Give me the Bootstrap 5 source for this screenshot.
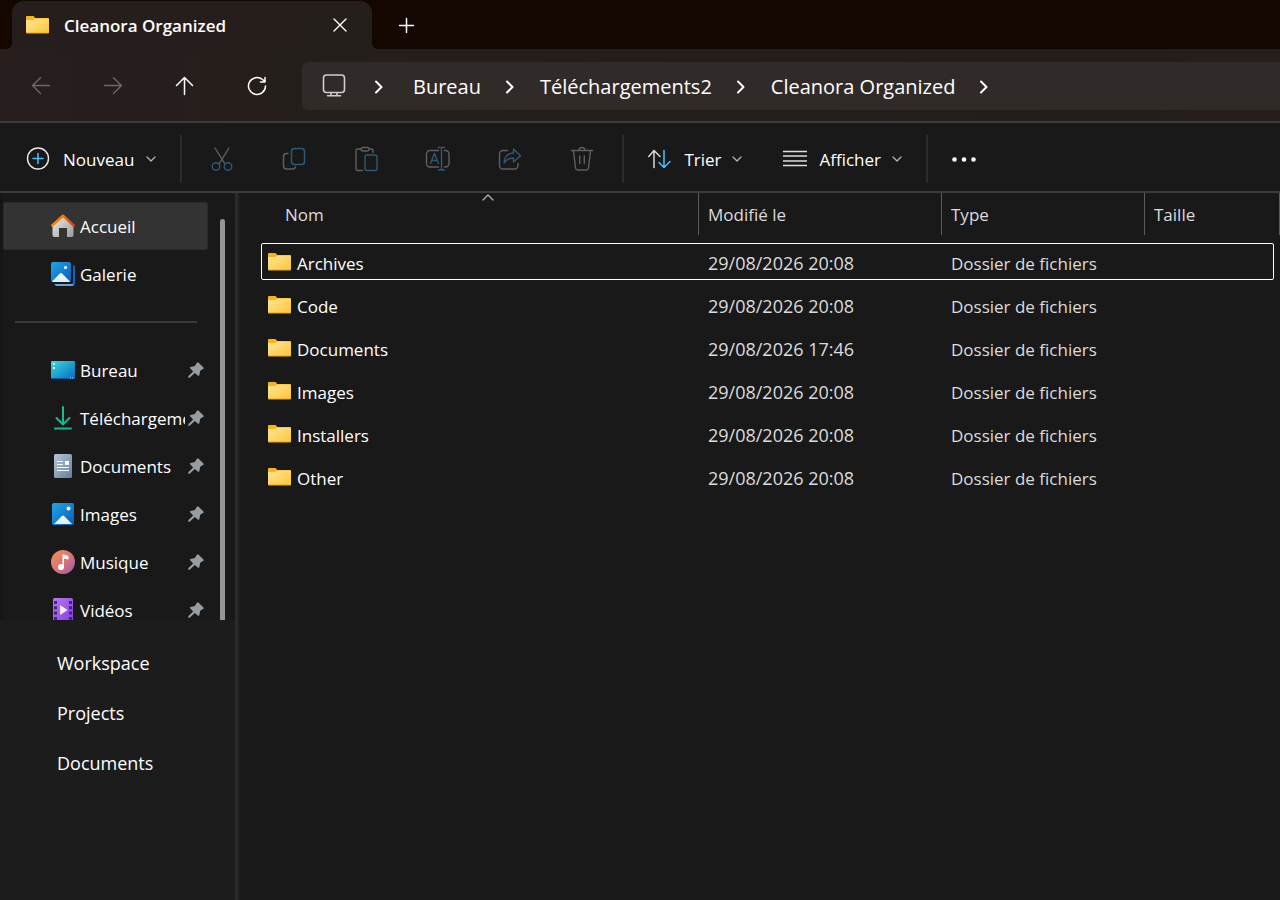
<!DOCTYPE html>
<html lang="fr" data-bs-theme="dark">
<head>
<meta charset="utf-8">
<meta name="viewport" content="width=device-width, initial-scale=1">
<title>Cleanora Organized</title>
<link rel="stylesheet" href="https://cdn.jsdelivr.net/npm/bootstrap@5.3.0/dist/css/bootstrap.min.css">
<style>
  body { font-family: "Open Sans", "Noto Sans", sans-serif; font-size: 17px; line-height: 24px; background: #191919; color: #fff; }
  button { font: inherit; }
  svg { display: block; flex: none; fill: none; stroke-linecap: round; stroke-linejoin: round; }
  a { color: inherit; text-decoration: none; }
  .plain-btn { background: none; border: 0; padding: 0; color: #fff; display: flex; align-items: center; }
  .tab-strip { background: #140700; height: 49px; padding: 1px 0 0 12px; }
  .win-tab { width: 360px; background: linear-gradient(90deg, #261e1c 60%, #241f1b); border-radius: 12px 12px 0 0; padding: 0 24px 0 14px; position: relative; }
  .win-tab::before, .win-tab::after { content: ""; position: absolute; bottom: 0; width: 6px; height: 6px; }
  .win-tab::before { left: -6px; background: radial-gradient(circle at 0 0, transparent 6px, #261e1c 6px); }
  .win-tab::after { right: -6px; background: radial-gradient(circle at 100% 0, transparent 6px, #241f1b 6px); }
  .tab-title { font-weight: 600; padding-top: 2px; margin-left: 15px; }
  .new-tab { margin-left: 26px; }
  .nav-strip { background: linear-gradient(90deg, #271e1d, #241f1b 30%, #241e1b 90%, #271e1c); height: 74px; border-bottom: 2px solid #3c3c3c; padding: 2px 0 0 27px; }
  .nav-btns { width: 275px; gap: 48px; }
  .dim { color: #6f6866; }
  .path-bar { background: #302b28; border-radius: 6px 0 0 6px; height: 48px; font-size: 20px; padding-left: 20px; min-width: 0; overflow: hidden; }
  .path-bar a { padding-top: 2px; white-space: nowrap; }
  .crumb-arrow { margin: 2px 25px 0 24px; }
  .crumb-first { margin: 2px 29px 0 28px; }
  .tool-strip { height: 70px; border-bottom: 2px solid #3c3c3c; padding: 3px 0 0 26px; }
  .tool-strip .label-btn { gap: 11px; }
  .tool-strip .label-btn span { padding: 2px 0 0 1px; }
  .tool-strip .new-btn { gap: 12px; }
  .tool-strip .view-btn { margin-left: 41px; }
  .tool-sep { width: 2px; height: 48px; background: #2b2b2b; flex: none; }
  .icon-btn { width: 72px; justify-content: center; }
  .grey-line { stroke: #5f5f5f; }
  .blue-line { stroke: #2b5a75; }
  .side-pane { width: 240px; background: #1c1c1c; border-right: 2px solid #1e1e1e; box-shadow: inset -3px 0 #2b2b2b; }
  .side-scroll { max-height: 427px; overflow: hidden; margin-right: 3px; background: #191919; border-left: 3px solid #161616; padding-top: 9px; }
  .side-row { height: 48px; padding: 0 3px 0 47px; width: 205px; gap: 3px; border: 1px solid transparent; border-radius: 2px; }
  .side-row.active { background: #333; border-color: #2b2b2b; }
  .side-row .side-name { flex: 1 1 0; overflow: hidden; white-space: nowrap; padding: 1px 0 0 2px; }
  .side-icon { width: 24px; flex: none; display: flex; justify-content: center; }
  .side-rule { height: 2px; background: #3a3a3a; margin: 23px 12px; width: 182px; }
  .side-thumb { width: 5px; background: #959595; border-radius: 3px 3px 0 0; margin: 17px 0 0 11px; flex: none; }
  .side-scroll nav { flex: 0 0 205px; }
  .lower-links { padding: 18px 0 0 57px; font-size: 18px; line-height: 50px; }
  .list-pane { padding-left: 18px; min-width: 0; }
  .files { table-layout: fixed; border-collapse: collapse; width: 100%; }
  .files th { height: 47px; padding: 0; vertical-align: top; font-weight: 400; }
  .files th button { height: 42px; width: 100%; color: #dcdcdc; padding: 2px 0 0 9px; border-left: 1px solid #5c5c5c; position: relative; }
  .files th:first-child button { border-left: 0; padding-left: 27px; }
  .files th:last-child button { border-right: 1px solid #5c5c5c; }
  .sort-mark { position: absolute; top: 1px; left: 224px; }
  .files td { height: 43px; padding: 5px 0 0 10px; color: #dcdcdc; vertical-align: middle; }
  .files td.file-name { color: #fff; }
  .files td.file-date { font-size: 18px; padding-top: 3px; }
  .file-name svg { margin: 0 6px 5px 0; }
  .files tr.focused { position: relative; }
  .files tr.focused td:last-child::after { content: ""; position: absolute; inset: 3px 6px 3px 3px; border: 1px solid #fff; border-radius: 2px; }
  .col-date { width: 243px; } .col-type { width: 203px; } .col-size { width: 136px; }
</style>
</head>
<body class="min-vh-100 d-flex flex-column">
<svg width="0" height="0" class="position-absolute" aria-hidden="true">
  <defs>
    <linearGradient id="gFold" x1="0" y1="0" x2="1" y2="1"><stop offset="0" stop-color="#ffe69a"/><stop offset="1" stop-color="#fdc536"/></linearGradient>
    <linearGradient id="gBlue" x1="0" y1="0" x2="1" y2="1"><stop offset="0" stop-color="#1fa6ea"/><stop offset="1" stop-color="#0a5cb5"/></linearGradient>
    <linearGradient id="gDesk" x1="0" y1="0" x2="1" y2="1"><stop offset="0" stop-color="#35dbe4"/><stop offset="1" stop-color="#0b68bd"/></linearGradient>
    <linearGradient id="gHome" x1="0" y1="0" x2="1" y2="1"><stop offset="0" stop-color="#ececec"/><stop offset="1" stop-color="#9b9b9b"/></linearGradient>
    <linearGradient id="gRoof" x1="0" y1="0" x2="1" y2="0"><stop offset="0" stop-color="#f08a10"/><stop offset=".5" stop-color="#ee7a0c"/><stop offset="1" stop-color="#d2420c"/></linearGradient>
    <linearGradient id="gDown" gradientUnits="userSpaceOnUse" x1="0" y1="0" x2="18" y2="22"><stop offset="0" stop-color="#2bc070"/><stop offset="1" stop-color="#12b0a0"/></linearGradient>
    <linearGradient id="gDoc" x1="0" y1="0" x2="1" y2="1"><stop offset="0" stop-color="#b4c6d8"/><stop offset="1" stop-color="#62809f"/></linearGradient>
    <linearGradient id="gMus" x1="0" y1="0" x2="1" y2="1"><stop offset="0" stop-color="#f5924e"/><stop offset=".55" stop-color="#d97277"/><stop offset="1" stop-color="#8e5cb8"/></linearGradient>
    <linearGradient id="gVid" x1="0" y1="0" x2="1" y2="1"><stop offset="0" stop-color="#b876f5"/><stop offset="1" stop-color="#8340dd"/></linearGradient>
    <linearGradient id="gHill" x1="0" y1="0" x2="0" y2="1"><stop offset="0" stop-color="#fff"/><stop offset="1" stop-color="#d8ecfb"/></linearGradient>
    <symbol id="folder" viewBox="0 0 23 18"><path d="M0 1q0-1 1-1h6q1 0 1.500 1l.5 1h13q1 0 1 1v14H0z" fill="#fbb315"/><path d="M0 5q0-1 1-1h6l2-1.500h13q1 0 1 1V16q0 1-1 1H1q-1 0-1-1z" fill="url(#gFold)"/><path d="M0 16.500h23q0 1-1 1H1q-1 0-1-1z" fill="#eda51d"/></symbol>
    <symbol id="pin" viewBox="0 0 16 16"><path d="M8.700.9q.9-1 1.900-.1l4.700 4.500q1 1.100-.3 1.800l-2.800 1.700-.9 4.400q-.5 1.400-1.600.4L6.700 10.900 2 15.500.1 16l.4-1.900 4.700-4.700L2.300 6.600q-1-1.200.4-1.700l4.200-.9z" fill="#959da3"/></symbol>
    <symbol id="chev" viewBox="0 0 10 14"><path d="M2 1.500 7.500 7l-5.500 5.500" stroke="#fff" stroke-width="2"/></symbol>
    <symbol id="down" viewBox="0 0 10 6"><path d="M1 1l4 4 4-4" stroke="#b5b5b5" stroke-width="1.300"/></symbol>
  </defs>
</svg>

<header>
  <div class="tab-strip d-flex">
    <div class="win-tab d-flex align-items-center">
      <svg width="23" height="18"><use href="#folder"/></svg>
      <span class="tab-title">Cleanora Organized</span>
      <button class="plain-btn ms-auto" aria-label="Fermer l'onglet"><svg width="15" height="15" stroke="#fff" stroke-width="1.400"><path d="M1 1l12 12M13 1l-12 12"/></svg></button>
    </div>
    <button class="plain-btn new-tab" aria-label="Nouvel onglet"><svg width="16" height="16" stroke="#fff" stroke-width="1.500"><path d="M8.500 1.500v14M1.500 8.500h14"/></svg></button>
  </div>
  <nav class="nav-strip d-flex align-items-center" aria-label="Navigation">
    <div class="nav-btns d-flex flex-shrink-0 align-items-center">
      <button class="plain-btn dim ps-1" aria-label="Précédent" disabled><svg width="20" height="18" stroke="currentColor" stroke-width="1.400"><path d="M18.500 8.500H1.500M9.500 .8L1.500 8.500l8 8"/></svg></button>
      <button class="plain-btn dim ps-1" aria-label="Suivant" disabled><svg width="20" height="18" stroke="currentColor" stroke-width="1.400"><path d="M1.500 8.500h17M10.500 .8l8 7.700-8 8"/></svg></button>
      <button class="plain-btn ps-1" aria-label="Monter"><svg width="20" height="20" stroke="#fff" stroke-width="1.500"><path d="M9.500 18.500V2M1.500 9.500l8-8 8 8"/></svg></button>
      <button class="plain-btn ps-1" aria-label="Actualiser"><svg width="20" height="20" stroke="#fff" stroke-width="1.500"><path d="M18.500 10A8.500 8.500 0 1 1 15.500 3.500l2.500 2M18 1.500v4.500h-4.500"/></svg></button>
    </div>
    <div class="path-bar flex-grow-1 d-flex align-items-center">
      <svg width="24" height="26" stroke="#d0cdcb" stroke-width="1.600"><rect x="1.500" y="2" width="21" height="17.500" rx="3"/><path d="M9 20v2.500M15 20v2.500M5.500 22.700h13"/></svg>
      <svg class="crumb-first" width="10" height="14"><use href="#chev"/></svg>
      <a href="#">Bureau</a>
      <svg class="crumb-arrow" width="10" height="14"><use href="#chev"/></svg>
      <a href="#">Téléchargements2</a>
      <svg class="crumb-arrow" width="10" height="14"><use href="#chev"/></svg>
      <a href="#">Cleanora Organized</a>
      <svg class="crumb-arrow" width="10" height="14"><use href="#chev"/></svg>
    </div>
  </nav>
  <div class="tool-strip d-flex align-items-center" role="toolbar" aria-label="Commandes">
    <button class="plain-btn label-btn new-btn"><svg width="24" height="24"><circle cx="12" cy="11.500" r="10.500" stroke="#e8e8e8" stroke-width="1.400"/><path d="M12 6.500v10M7 11.500h10" stroke="#4cc2ff" stroke-width="1.500"/></svg><span>Nouveau</span><svg width="10" height="6"><use href="#down"/></svg></button>
    <div class="tool-sep ms-4"></div>
    <div class="d-flex px-1">
      <button class="plain-btn icon-btn" aria-label="Couper" disabled><svg width="24" height="26" stroke-width="1.400"><path class="grey-line" d="M5 2l10 16M19 2L9 18"/><circle class="blue-line" cx="6" cy="20.500" r="3.800"/><circle class="blue-line" cx="18" cy="20.500" r="3.800"/></svg></button>
      <button class="plain-btn icon-btn" aria-label="Copier" disabled><svg width="24" height="26" stroke-width="1.500"><path class="grey-line" d="M6 7.500H4.500a3 3 0 0 0-3 3V20a3 3 0 0 0 3 3H11q2 0 2.500-2"/><rect class="blue-line" x="9.500" y="2.500" width="13" height="16" rx="3"/></svg></button>
      <button class="plain-btn icon-btn" aria-label="Coller" disabled><svg width="24" height="26" stroke-width="1.400"><path class="grey-line" d="M7 3H4a2 2 0 0 0-2 2v17.500a2 2 0 0 0 2 2h4.500M15 3h2a2 2 0 0 1 2 2v1.500"/><rect class="grey-line" x="7" y="1.500" width="8" height="3.500" rx="1.700"/><rect class="blue-line" x="11" y="9" width="12" height="15.500" rx="2"/></svg></button>
      <button class="plain-btn icon-btn" aria-label="Renommer" disabled><svg width="26" height="26" stroke-width="1.400"><path class="grey-line" d="M13.500 4.500H5a3.500 3.500 0 0 0-3.500 3.500v9.500A3.500 3.500 0 0 0 5 21h8.500M19.500 4.500h1a3.500 3.500 0 0 1 3.500 3.500v9.500a3.500 3.500 0 0 1-3.500 3.500h-1"/><path class="blue-line" d="M5.500 17.500L9.500 7.500l4 10M7 14.500h5M16.500 1.500v22.500M13.500 1.500h6M13.500 24h6"/></svg></button>
      <button class="plain-btn icon-btn" aria-label="Partager" disabled><svg width="24" height="26" stroke-width="1.400"><path class="grey-line" d="M9.500 4.500H5A3.500 3.500 0 0 0 1.500 8v11.500A3.500 3.500 0 0 0 5 23h11.500a3.500 3.500 0 0 0 3.500-3.500v-2"/><path class="blue-line" d="M15.500 3l7 6.700-7 6.300v-4q-6 0-9.500 5Q6.500 7.500 15.500 7z"/></svg></button>
      <button class="plain-btn icon-btn" aria-label="Supprimer" disabled><svg width="24" height="26" stroke-width="1.400"><path class="grey-line" d="M1.500 4.500h21M9 4.500a3 3 0 0 1 6 0M3.500 4.500l2 17.500q.3 2 2.300 2h8.400q2 0 2.300-2l2-17.500M9.700 10v7.500M14.300 10v7.500"/></svg></button>
    </div>
    <div class="tool-sep"></div>
    <button class="plain-btn label-btn ms-4"><svg width="24" height="20" stroke-width="1.500"><path stroke="#d8d8d8" d="M6 18.500V1.500M0.800 7.500l5.200-6 6 6"/><path stroke="#4cc2ff" d="M16 1.500v17M11 13.500l5 5 6-6"/></svg><span>Trier</span><svg width="10" height="6"><use href="#down"/></svg></button>
    <button class="plain-btn label-btn view-btn"><svg width="24" height="17"><path stroke="#dededa" stroke-width="1.500" stroke-linecap="butt" d="M0 1.500h24M0 6h24M0 11h24M0 15.500h24"/></svg><span>Afficher</span><svg width="10" height="6"><use href="#down"/></svg></button>
    <div class="tool-sep ms-4"></div>
    <button class="plain-btn ms-4" aria-label="Plus d'options"><svg width="24" height="6"><path d="M2.500 3.500h.01M12 3.500h.01M21.500 3.500h.01" stroke="#fff" stroke-width="4.600"/></svg></button>
  </div>
</header>

<main class="d-flex flex-grow-1">
  <aside class="side-pane flex-shrink-0">
    <div class="side-scroll d-flex">
      <nav aria-label="Accès rapide">
        <a href="#" class="side-row active d-flex align-items-center"><span class="side-icon"><svg width="24" height="24"><path d="M1.500 11.500L12 1.500l10.500 10V21q0 2-2 2H16v-9H8v9H3.500q-2 0-2-2z" fill="url(#gHome)"/><path d="M1.300 11.500L12 1.800l10.700 9.700" stroke="url(#gRoof)" stroke-width="2.600"/></svg></span><span class="side-name">Accueil</span></a>
        <a href="#" class="side-row d-flex align-items-center"><span class="side-icon"><svg width="24" height="24"><path d="M22 3q2 0 2 2v16q0 3-3 3H6q-2 0-2.500-2H20q2 0 2-2z" fill="#0b66c3"/><path d="M3.500 22H21l2 1q-1 1-2 1H6q-2 0-2.500-2z" fill="#6ba4dc"/><rect width="20" height="20" rx="2" fill="url(#gBlue)"/><circle cx="14.500" cy="5.500" r="1.600" fill="#fff"/><path d="M1 19.500l8-8q1-1 2 0l8 8q-.5.500-1 .5H2q-.5 0-1-.5z" fill="url(#gHill)"/></svg></span><span class="side-name">Galerie</span></a>
        <div class="side-rule"></div>
        <a href="#" class="side-row d-flex align-items-center"><span class="side-icon"><svg width="24" height="20"><rect y="1" width="24" height="18" rx="1" fill="url(#gDesk)"/><path d="M0 18h24q0 1-1 1H1q-1 0-1-1z" fill="#0a5a9e"/><path d="M2 3h2v2H2zM2 7h2v2H2z" fill="#fff"/><path d="M19 17.500h1v1h-1zM21 17.500h1v1h-1z" fill="#cde"/></svg></span><span class="side-name">Bureau</span><svg width="16" height="16"><use href="#pin"/></svg></a>
        <a href="#" class="side-row d-flex align-items-center"><span class="side-icon"><svg width="18" height="24" stroke="url(#gDown)" stroke-width="2" stroke-linecap="butt"><path d="M9 1v17.500M2.500 12l6.500 6.500 6.500-6.500"/><path d="M1 22.500h16v.01"/></svg></span><span class="side-name">Téléchargements</span><svg width="16" height="16"><use href="#pin"/></svg></a>
        <a href="#" class="side-row d-flex align-items-center"><span class="side-icon"><svg width="18" height="24"><rect width="18" height="24" rx="1.500" fill="url(#gDoc)"/><path d="M3 7.500h6M3 10.500h6M3 13.500h12M3 16.500h12" stroke="#fff" stroke-width="1.200" stroke-linecap="butt"/><rect x="11" y="7" width="4" height="4" fill="#fff"/></svg></span><span class="side-name">Documents</span><svg width="16" height="16"><use href="#pin"/></svg></a>
        <a href="#" class="side-row d-flex align-items-center"><span class="side-icon"><svg width="22" height="22"><rect width="22" height="22" rx="2" fill="url(#gBlue)"/><circle cx="16.500" cy="5.500" r="2" fill="#fff"/><path d="M2 21l8-8q1-1 2 0l8 8z" fill="url(#gHill)"/></svg></span><span class="side-name">Images</span><svg width="16" height="16"><use href="#pin"/></svg></a>
        <a href="#" class="side-row d-flex align-items-center"><span class="side-icon"><svg width="24" height="24"><circle cx="12" cy="12" r="12" fill="url(#gMus)"/><circle cx="10" cy="17" r="3" fill="#fff"/><path d="M11.500 17V4l6 2v3.500L13 8.500V17z" fill="#fff"/></svg></span><span class="side-name">Musique</span><svg width="16" height="16"><use href="#pin"/></svg></a>
        <a href="#" class="side-row d-flex align-items-center"><span class="side-icon"><svg width="20" height="24"><rect width="20" height="24" rx="1.500" fill="url(#gVid)"/><path d="M2.500 3v21M17.500 3v21" stroke="#43267c" stroke-width="3" stroke-dasharray="3 2.300" stroke-linecap="butt"/><path d="M7 7l7.500 5L7 17z" fill="#f2ecfa"/></svg></span><span class="side-name">Vidéos</span><svg width="16" height="16"><use href="#pin"/></svg></a>
      </nav>
      <div class="side-thumb"></div>
    </div>
    <nav class="lower-links d-flex flex-column" aria-label="Dossiers">
      <a href="#">Workspace</a>
      <a href="#">Projects</a>
      <a href="#">Documents</a>
    </nav>
  </aside>
  <section class="list-pane flex-grow-1">
    <table class="files">
      <colgroup><col><col class="col-date"><col class="col-type"><col class="col-size"></colgroup>
      <thead>
        <tr>
          <th scope="col" aria-sort="ascending"><button class="plain-btn">Nom<svg class="sort-mark" width="12" height="7"><path d="M1 6l5-5 5 5" stroke="#b5b5b5" stroke-width="1.200"/></svg></button></th>
          <th scope="col"><button class="plain-btn">Modifié le</button></th>
          <th scope="col"><button class="plain-btn">Type</button></th>
          <th scope="col"><button class="plain-btn">Taille</button></th>
        </tr>
      </thead>
      <tbody>
        <tr class="focused"><td class="file-name"><div class="d-flex align-items-center"><svg width="23" height="18"><use href="#folder"/></svg>Archives</div></td><td class="file-date">29/08/2026 20:08</td><td>Dossier de fichiers</td><td></td></tr>
        <tr><td class="file-name"><div class="d-flex align-items-center"><svg width="23" height="18"><use href="#folder"/></svg>Code</div></td><td class="file-date">29/08/2026 20:08</td><td>Dossier de fichiers</td><td></td></tr>
        <tr><td class="file-name"><div class="d-flex align-items-center"><svg width="23" height="18"><use href="#folder"/></svg>Documents</div></td><td class="file-date">29/08/2026 17:46</td><td>Dossier de fichiers</td><td></td></tr>
        <tr><td class="file-name"><div class="d-flex align-items-center"><svg width="23" height="18"><use href="#folder"/></svg>Images</div></td><td class="file-date">29/08/2026 20:08</td><td>Dossier de fichiers</td><td></td></tr>
        <tr><td class="file-name"><div class="d-flex align-items-center"><svg width="23" height="18"><use href="#folder"/></svg>Installers</div></td><td class="file-date">29/08/2026 20:08</td><td>Dossier de fichiers</td><td></td></tr>
        <tr><td class="file-name"><div class="d-flex align-items-center"><svg width="23" height="18"><use href="#folder"/></svg>Other</div></td><td class="file-date">29/08/2026 20:08</td><td>Dossier de fichiers</td><td></td></tr>
      </tbody>
    </table>
  </section>
</main>
<script src="https://cdn.jsdelivr.net/npm/bootstrap@5.3.0/dist/js/bootstrap.bundle.min.js"></script>
</body>
</html>
